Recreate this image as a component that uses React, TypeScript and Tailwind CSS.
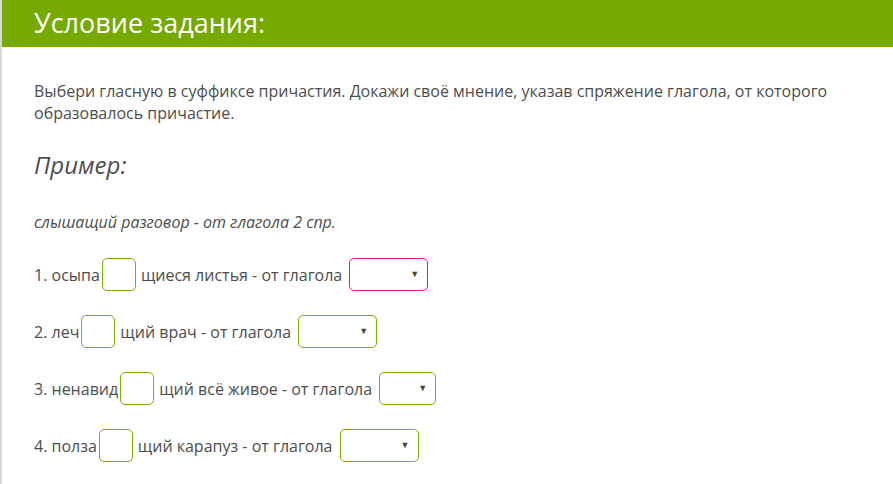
import React from "react";

const Blank = () => (
  <span className="inline-block w-[34px] h-[33px] border border-[#7cb000] rounded-[5px] bg-white align-middle mx-[2px] mr-[5px]" />
);

const Sel = ({ w, pink }: { w: number; pink?: boolean }) => (
  <span
    className={`relative inline-block h-[33px] rounded-[5px] bg-white align-middle ml-[7px] border ${pink ? "border-[#e5197a]" : "border-[#7cb000]"}`}
    style={{ width: w }}
  >
    <span className="absolute right-[8px] top-[10px] text-[9px] leading-none text-[#444]">▼</span>
  </span>
);

export default function App() {
  const rows: { pre: string; post: string; w: number; pink?: boolean }[] = [
    { pre: "1. осыпа", post: "щиеся листья - от глагола", w: 79, pink: true },
    { pre: "2. леч", post: "щий врач - от глагола", w: 79 },
    { pre: "3. ненавид", post: "щий всё живое - от глагола", w: 57 },
    { pre: "4. полза", post: "щий карапуз - от глагола", w: 79 },
  ];
  return (
    <div className="w-[893px] h-[484px] bg-white border-l-2 border-[#d9d9d9] text-[#4d4d4d] overflow-hidden" style={{ fontFamily: '"Open Sans", sans-serif' }}>
      <div className="h-[47px] bg-[#77aa00] flex items-center pl-[32px]">
        <span className="text-white text-[27px] leading-none -mt-[3px]">Условие задания:</span>
      </div>
      <div className="pl-[32px] pr-[40px]">
        <p className="mt-[33px] text-[16px] leading-[22px]">
          Выбери гласную в суффиксе причастия. Докажи своё мнение, указав спряжение глагола, от которого образовалось причастие.
        </p>
        <p className="mt-[26px] text-[24px] leading-[30px] italic">Пример:</p>
        <p className="mt-[31px] text-[16px] leading-[22px] italic">слышащий разговор - от глагола 2 спр.</p>
        <div className="mt-[25px] flex flex-col gap-[24px]">
          {rows.map((r, i) => (
            <div key={i} className="flex items-center h-[33px] text-[16px]">
              <span>{r.pre}</span>
              <Blank />
              <span>{r.post}</span>
              <Sel w={r.w} pink={r.pink} />
            </div>
          ))}
        </div>
      </div>
    </div>
  );
}
